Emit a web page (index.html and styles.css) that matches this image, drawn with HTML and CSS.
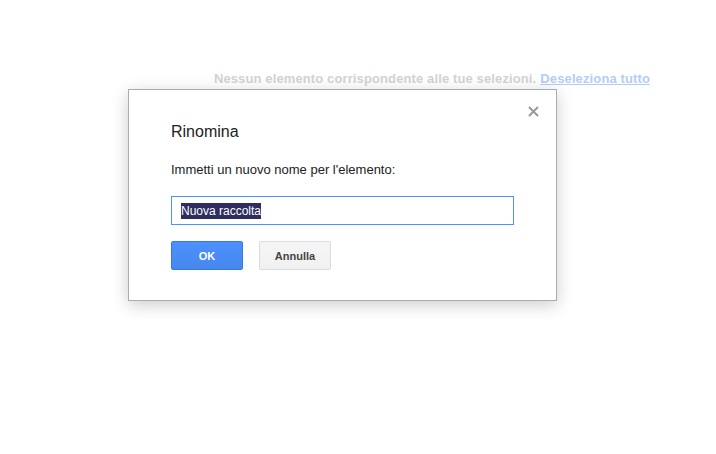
FILE: index.html
```html
<!DOCTYPE html>
<html lang="it">
<head>
<meta charset="utf-8">
<title>Rinomina</title>
<link rel="stylesheet" href="styles.css">
</head>
<body>
<div class="page">
  <div class="notice">
    <span class="notice-text">Nessun elemento corrispondente alle tue selezioni.</span>
    <a class="notice-link" href="#">Deseleziona tutto</a>
  </div>
</div>
<div class="dialog" role="dialog">
  <span class="close" aria-label="Chiudi">
    <svg width="11" height="11" viewBox="0 0 11 11"><path d="M1 1L10 10M10 1L1 10" stroke="#999" stroke-width="2"/></svg>
  </span>
  <div class="title">Rinomina</div>
  <div class="label">Immetti un nuovo nome per l'elemento:</div>
  <div class="input"><span class="sel">Nuova raccolta</span></div>
  <div class="buttons">
    <button class="btn btn-ok">OK</button>
    <button class="btn btn-cancel">Annulla</button>
  </div>
</div>
</body>
</html>
```

FILE: styles.css
```css
html, body {
  margin: 0;
  padding: 0;
  background: #fff;
  font-family: Arial, "Liberation Sans", sans-serif;
  font-size: 13px;
  color: #222;
}
.page {
  width: 716px;
  height: 454px;
}
.notice {
  display: flex;
  justify-content: flex-end;
  gap: 4px;
  padding: 71px 66px 0 0;
  font-weight: bold;
  font-size: 13px;
  letter-spacing: 0.12px;
  line-height: 16px;
}
.notice-text {
  color: #d3d3d3;
}
.notice-link {
  color: #b3cdf6;
  text-decoration: underline;
}
.dialog {
  position: absolute;
  left: 128px;
  top: 89px;
  width: 343px;
  padding: 30px 42px 30px 42px;
  background: #fff;
  border: 1px solid #acacac;
  box-shadow: 0 4px 16px rgba(0,0,0,0.2);
}
.close {
  position: absolute;
  right: 17px;
  top: 16px;
  width: 11px;
  height: 11px;
  display: block;
}
.close svg {
  display: block;
}
.title {
  font-size: 16px;
  line-height: 24px;
  color: #222;
}
.label {
  margin-top: 18px;
  font-size: 13px;
  line-height: 16px;
  color: #222;
}
.input {
  margin-top: 18px;
  height: 27px;
  border: 1px solid #4d90fe;
  display: flex;
  align-items: center;
  padding-left: 9px;
}
.sel {
  background: #2d2d5f;
  color: #fff;
  font-size: 12px;
  line-height: 16px;
}
.buttons {
  display: flex;
  gap: 16px;
  margin-top: 16px;
}
.btn {
  width: 72px;
  height: 29px;
  margin: 0;
  padding: 0;
  border-radius: 2px;
  font-family: Arial, "Liberation Sans", sans-serif;
  font-size: 11px;
  font-weight: bold;
}
.btn-ok {
  background: linear-gradient(#4d90fe, #4787ed);
  border: 1px solid #3079ed;
  color: #fff;
}
.btn-cancel {
  background: linear-gradient(#f5f5f5, #f1f1f1);
  border: 1px solid #dcdcdc;
  color: #444;
}
```
